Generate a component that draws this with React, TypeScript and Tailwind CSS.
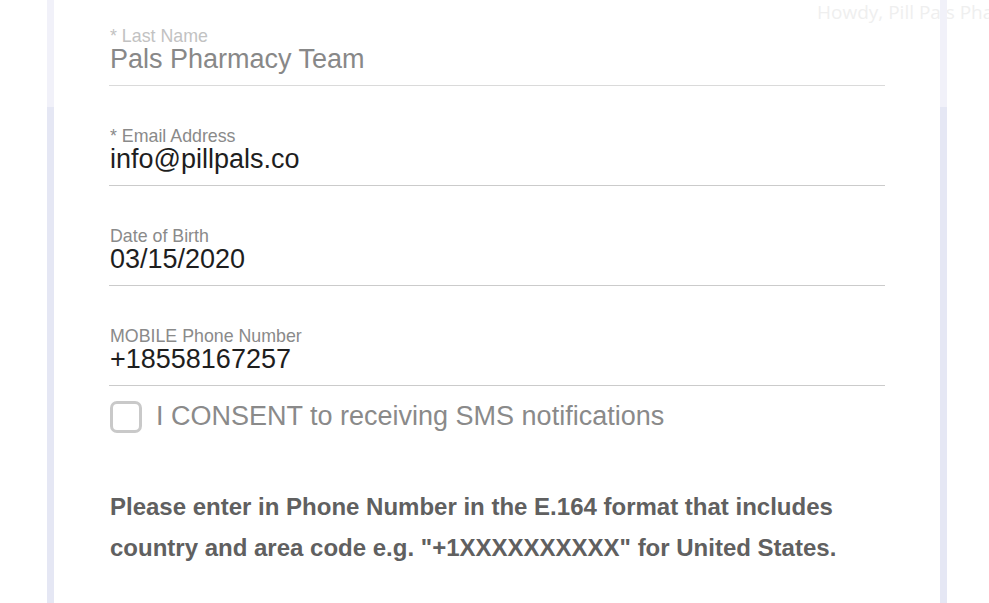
import React from "react";

const font = { fontFamily: '"Liberation Sans", Arial, sans-serif' };

function Field({
  label,
  value,
  first,
  disabled,
}: {
  label: string;
  value: string;
  first?: boolean;
  disabled?: boolean;
}) {
  return (
    <div
      className={`${first ? "" : "mt-[42px]"} pb-[11px] border-b ${
        disabled ? "border-[#dadada]" : "border-[#cbcbcb]"
      }`}
    >
      <div
        className={`pl-[1px] text-[17.8px] leading-[16px] ${
          disabled ? "text-[#c2c2c2]" : "text-[#8a8a8a]"
        }`}
      >
        {label}
      </div>
      <div
        className={`pl-[1px] text-[27px] leading-[30px] ${
          disabled ? "text-[#888888]" : "text-[#1e1e1e]"
        }`}
      >
        {value}
      </div>
    </div>
  );
}

function Strip() {
  return (
    <div className="relative z-10 flex w-[7px] shrink-0 flex-col">
      <div className="h-[107px] bg-[#f1f1f9]" />
      <div className="flex-1 bg-[#e5e7f4]" />
    </div>
  );
}

export default function App() {
  return (
    <div
      className="relative h-[603px] w-[989px] overflow-hidden bg-white"
      style={font}
    >
      <div
        className="absolute left-[817px] top-[-2px] z-[5] whitespace-nowrap text-[19px] text-[#efefef]"
        style={{ fontFamily: '"Open Sans", sans-serif' }}
      >
        Howdy, Pill Pals Pharmacy
      </div>
      <div className="flex h-full">
        <div className="w-[47px] shrink-0" />
        <Strip />
        <div className="flex-1 bg-white pl-[55px] pr-[55px] pt-[28px]">
          <Field label="* Last Name" value="Pals Pharmacy Team" first disabled />
          <Field label="* Email Address" value="info@pillpals.co" />
          <Field label="Date of Birth" value="03/15/2020" />
          <Field label="MOBILE Phone Number" value="+18558167257" />
          <div className="mt-[15px] flex items-center">
            <div className="ml-[1px] h-[32px] w-[32px] shrink-0 rounded-[7px] border-[3px] border-[#c9c9c9] bg-white" />
            <span className="ml-[14px] -mt-[3px] text-[27px] leading-[32px] text-[#8a8a8a]">
              I CONSENT to receiving SMS notifications
            </span>
          </div>
          <p className="mt-[53px] pl-[1px] text-[24px] font-bold leading-[41px] text-[#606060]">
            Please enter in Phone Number in the E.164 format that includes
            country and area code e.g. "+1XXXXXXXXXX" for United States.
          </p>
        </div>
        <Strip />
        <div className="w-[42px] shrink-0" />
      </div>
    </div>
  );
}
